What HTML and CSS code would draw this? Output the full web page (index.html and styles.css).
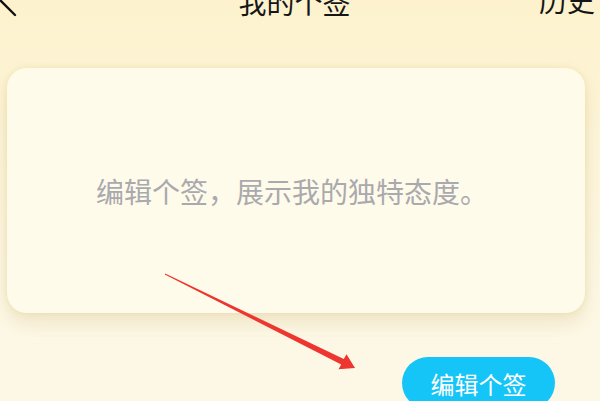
FILE: index.html
```html
<!DOCTYPE html>
<html lang="zh-CN">
<head>
<meta charset="utf-8">
<link rel="stylesheet" href="styles.css">
</head>
<body>
<div class="page">
  <header class="topbar">
    <svg class="back" width="22" height="32" viewBox="0 0 22 32">
      <path d="M19 -3 L3 13 L19 29" fill="none" stroke="#111" stroke-width="2.4" stroke-linecap="round" stroke-linejoin="round"/>
    </svg>
    <div class="title">我的个签</div>
    <div class="history">历史</div>
  </header>
  <section class="card">
    <p class="placeholder">编辑个签，展示我的独特态度。</p>
  </section>
  <div class="actions">
    <button class="edit-btn">编辑个签</button>
  </div>
  <svg class="annot" width="600" height="401" viewBox="0 0 600 401">
    <polygon points="165.2,273.5 343.8,359.1 346.5,354.2 355,368 338.5,369.2 341.2,364.5 164.8,274.4" fill="#ee3631"/>
  </svg>
</div>
</body>
</html>
```

FILE: styles.css
```css
* { box-sizing: border-box; }
html, body {
  margin: 0;
  padding: 0;
  width: 600px;
  height: 401px;
  overflow: hidden;
}
body {
  font-family: "Noto Sans CJK SC", "Noto Sans", sans-serif;
  background: linear-gradient(180deg, #fdf2cd 0%, #fdf5d9 30%, #fdf8e6 75%, #fdf8e6 100%);
}
.page {
  position: relative;
  display: flow-root;
  width: 600px;
  height: 401px;
}
.topbar {
  display: grid;
  grid-template-columns: 1fr auto 1fr;
  align-items: center;
  height: 32px;
  margin-top: -14px;
  padding-right: 5px;
}
.back {
  display: block;
  margin-left: -4px;
}
.title {
  font-size: 28px;
  line-height: 28px;
  color: #161616;
  margin-left: -6px;
}
.history {
  justify-self: end;
  font-size: 28px;
  line-height: 28px;
  color: #161616;
  margin-top: -4px;
}
.card {
  margin: 50px 15px 0 7px;
  height: 245px;
  border-radius: 20px;
  background: #fffbea;
  box-shadow: 0 10px 20px rgba(205, 180, 110, 0.28), 0 0 6px rgba(230, 205, 140, 0.35);
  display: flex;
  align-items: center;
  justify-content: center;
}
.placeholder {
  margin: 0 0 0 -8px;
  font-size: 28px;
  line-height: 28px;
  color: #a9a9ae;
}
.actions {
  display: flex;
  padding-left: 402px;
  margin-top: 44px;
}
.edit-btn {
  width: 153px;
  height: 52px;
  border: none;
  border-radius: 26px;
  background: #16c5f7;
  color: #ffffff;
  font-family: "Noto Sans CJK SC", "Noto Sans", sans-serif;
  font-size: 24px;
  line-height: 24px;
  padding: 0;
  padding-top: 2px;
}
.annot {
  position: absolute;
  left: 0;
  top: 0;
  pointer-events: none;
}
```
